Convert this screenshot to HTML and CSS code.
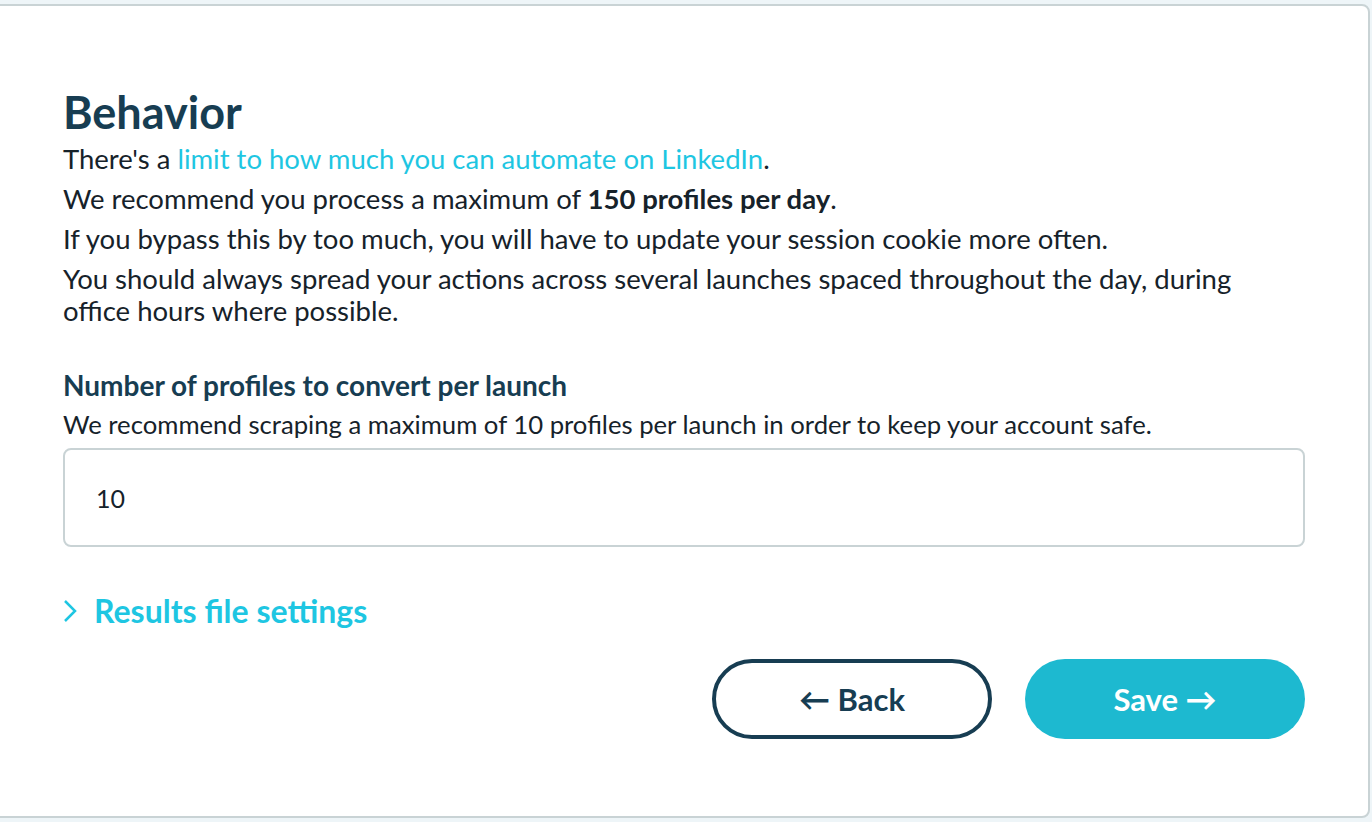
FILE: index.html
```html
<!DOCTYPE html>
<html lang="en">
<head>
    <meta charset="UTF-8">
    <title>Behavior</title>
    <link rel="stylesheet" href="styles.css">
</head>
<body>
<div class="card">
    <h2 class="title">Behavior</h2>
    <p>There's a <a href="#">limit to how much you can automate on LinkedIn</a>.</p>
    <p>We recommend you process a maximum of <strong>150 profiles per day</strong>.</p>
    <p>If you bypass this by too much, you will have to update your session cookie more often.</p>
    <p>You should always spread your actions across several launches spaced throughout the day, during office hours where possible.</p>

    <div class="field">
        <label for="numProfiles">Number of profiles to convert per launch</label>
        <div class="hint">We recommend scraping a maximum of 10 profiles per launch in order to keep your account safe.</div>
        <input type="text" id="numProfiles" value="10">
    </div>

    <div class="toggle">
        <svg width="14" height="24" viewBox="0 0 14 24"><path d="M2 2 L12 12 L2 22" fill="none" stroke="#1ec6e2" stroke-width="2.5"/></svg>
        <span>Results file settings</span>
    </div>

    <div class="actions">
        <button class="btn back">&larr; Back</button>
        <button class="btn save">Save &rarr;</button>
    </div>
</div>
</body>
</html>
```

FILE: styles.css
```css
body {
    margin: 0;
    background: #eef5f8;
    font-family: Lato, "Open Sans", sans-serif;
    color: #16222a;
    overflow: hidden;
}
.card {
    margin: 4px 2px 0 -10px;
    height: 814px;
    box-sizing: border-box;
    background: #ffffff;
    border: 2px solid #c9d3d5;
    border-radius: 8px;
    padding: 80px 63px 0 71px;
}
.title {
    margin: 0 0 5px;
    font-size: 45px;
    line-height: 52px;
    font-weight: 700;
    color: #173d52;
}
p {
    margin: 0 0 8px;
    max-width: 1200px;
    font-size: 27.5px;
    line-height: 32px;
}
a {
    color: #1ec6e2;
    text-decoration: none;
}
.field {
    margin-top: 42px;
}
.field label {
    display: block;
    font-size: 28px;
    line-height: 32px;
    font-weight: 700;
    color: #173d52;
}
.hint {
    font-size: 25.7px;
    line-height: 32px;
    margin-top: 7px;
}
.field input {
    display: block;
    width: 100%;
    box-sizing: border-box;
    height: 99px;
    margin-top: 8px;
    padding: 0 31px;
    border: 2px solid #c9d3d5;
    border-radius: 8px;
    font-family: inherit;
    font-size: 25px;
    color: #16222a;
    outline: none;
}
.toggle {
    display: flex;
    align-items: center;
    gap: 17px;
    margin-top: 44px;
    color: #1ec6e2;
    font-size: 32px;
    font-weight: 700;
}
.actions {
    display: flex;
    justify-content: flex-end;
    gap: 33px;
    margin-top: 29px;
}
.btn {
    width: 280px;
    height: 80px;
    border-radius: 40px;
    font-family: inherit;
    font-size: 31px;
    font-weight: 700;
    cursor: pointer;
}
.back {
    background: #ffffff;
    border: 4px solid #173d52;
    color: #173d52;
}
.save {
    background: #1db9d0;
    border: none;
    color: #ffffff;
}
```
